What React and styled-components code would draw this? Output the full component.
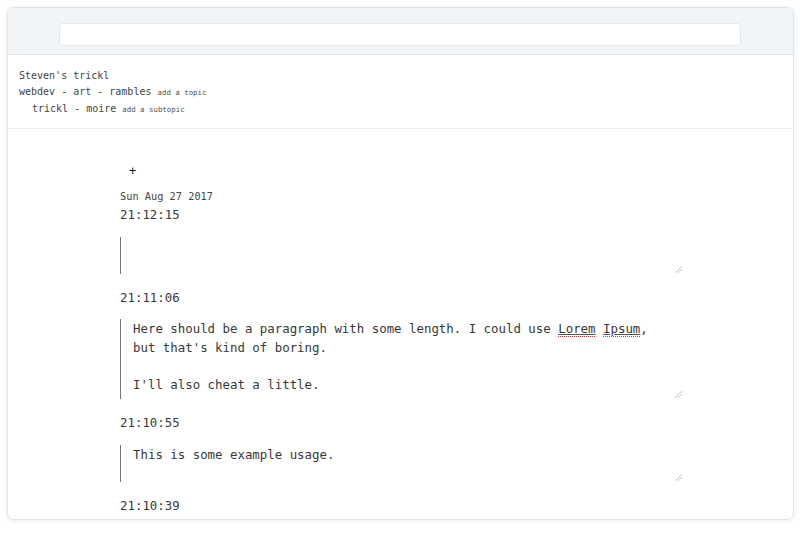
import React from 'react';
import styled, { createGlobalStyle } from 'styled-components';

const Global = createGlobalStyle`
  html, body { margin: 0; padding: 0; background: #fff; }
  body { font-family: "DejaVu Sans Mono", "Liberation Mono", monospace; color: #333; }
  * { box-sizing: border-box; }
`;

const Page = styled.div`
  padding: 7px 6px 0 7px;
  height: 537px;
`;

const Card = styled.div`
  width: 787px;
  height: 513px;
  border: 1px solid #dfe4e9;
  border-radius: 7px;
  box-shadow: 0 1px 5px rgba(0, 0, 0, 0.08);
  background: #fff;
  display: flex;
  flex-direction: column;
  overflow: hidden;
`;

const TopBar = styled.div`
  flex: none;
  height: 47px;
  background: #f1f5f8;
  border-bottom: 1px solid #dde3e9;
  padding: 15px 52px 0 51px;
`;

const SearchInput = styled.input`
  display: block;
  width: 100%;
  height: 23px;
  border: 1px solid #e4e9ee;
  border-radius: 3px;
  background: #fff;
  outline: none;
`;

const Header = styled.div`
  flex: none;
  padding: 13px 11px 10px;
  border-bottom: 1px solid #eceff2;
  font-size: 10px;
  line-height: 16px;
  color: #444;
`;

const HeaderLine = styled.div`
  white-space: pre;
  padding-left: ${p => (p.$indent ? '13px' : '0')};
`;

const Small = styled.span`
  font-size: 7.4px;
  color: #555;
`;

const Content = styled.div`
  flex: 1;
  overflow: hidden;
  padding: 34px 0 0 112px;
`;

const AddButton = styled.button`
  display: block;
  border: none;
  background: none;
  padding: 0;
  margin-left: 9px;
  font-family: inherit;
  font-size: 12px;
  line-height: 16px;
  height: 16px;
  color: #111;
`;

const DateLabel = styled.div`
  margin-top: 9px;
  font-size: 10.3px;
  line-height: 17px;
  color: #444;
`;

const Time = styled.div`
  font-size: 12.4px;
  line-height: 19px;
  margin-bottom: 12.5px;
  color: #383838;
`;

const Entry = styled.div`
  width: 563px;
  height: ${p => p.$h}px;
  border-left: 1px solid #777;
  padding: 1px 12px 0;
  margin-bottom: 14px;
  font-size: 12.4px;
  line-height: 18.5px;
  color: #383838;
  white-space: pre-wrap;
  resize: both;
  overflow: auto;

  &::-webkit-resizer {
    background:
      linear-gradient(135deg,
        transparent 0 52%, #c4c4c4 52% 60%,
        transparent 60% 70%, #c4c4c4 70% 78%,
        transparent 78%) right 1px bottom 1px / 8px 8px no-repeat;
  }
`;

const Misspelled = styled.span`
  text-decoration: underline;
  text-decoration-color: #555;
  text-underline-offset: 1px;
  background: repeating-linear-gradient(90deg, #e33 0 1px, transparent 1px 2px) left bottom / 100% 1.5px no-repeat;
  padding-bottom: 1px;
`;

const entries = [
  { time: '21:12:15', h: 37, body: '' },
  {
    time: '21:11:06',
    h: 80,
    body: (
      <>
        Here should be a paragraph with some length. I could use <Misspelled>Lorem</Misspelled>{' '}
        <Misspelled>Ipsum</Misspelled>,{'\n'}but that's kind of boring.{'\n\n'}I'll also cheat a little.
      </>
    ),
  },
  { time: '21:10:55', h: 37, body: 'This is some example usage.' },
];

export default function App() {
  return (
    <>
      <Global />
      <Page>
        <Card>
          <TopBar>
            <SearchInput type="text" aria-label="search" />
          </TopBar>
          <Header>
            <HeaderLine>Steven's trickl</HeaderLine>
            <HeaderLine>
              webdev - art - rambles <Small>add a topic</Small>
            </HeaderLine>
            <HeaderLine $indent>
              trickl - moire <Small>add a subtopic</Small>
            </HeaderLine>
          </Header>
          <Content>
            <AddButton>+</AddButton>
            <DateLabel>Sun Aug 27 2017</DateLabel>
            {entries.map(e => (
              <React.Fragment key={e.time}>
                <Time>{e.time}</Time>
                <Entry $h={e.h}>{e.body}</Entry>
              </React.Fragment>
            ))}
            <Time>21:10:39</Time>
          </Content>
        </Card>
      </Page>
    </>
  );
}
